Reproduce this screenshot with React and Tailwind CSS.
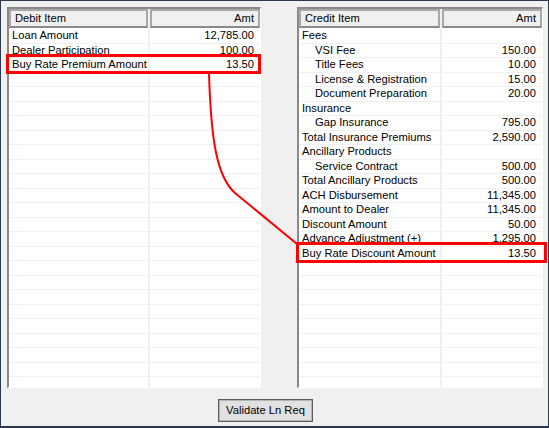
import React from 'react';

const debitRows = [
  { label: 'Loan Amount', amt: '12,785.00' },
  { label: 'Dealer Participation', amt: '100.00' },
  { label: 'Buy Rate Premium Amount', amt: '13.50' },
];

const creditRows = [
  { label: 'Fees', amt: '' },
  { label: 'VSI Fee', amt: '150.00', indent: true },
  { label: 'Title Fees', amt: '10.00', indent: true },
  { label: 'License & Registration', amt: '15.00', indent: true },
  { label: 'Document Preparation', amt: '20.00', indent: true },
  { label: 'Insurance', amt: '' },
  { label: 'Gap Insurance', amt: '795.00', indent: true },
  { label: 'Total Insurance Premiums', amt: '2,590.00' },
  { label: 'Ancillary Products', amt: '' },
  { label: 'Service Contract', amt: '500.00', indent: true },
  { label: 'Total Ancillary Products', amt: '500.00' },
  { label: 'ACH Disbursement', amt: '11,345.00' },
  { label: 'Amount to Dealer', amt: '11,345.00' },
  { label: 'Discount Amount', amt: '50.00' },
  { label: 'Advance Adjustment (+)', amt: '1,295.00' },
  { label: 'Buy Rate Discount Amount', amt: '13.50' },
];

const Grid = ({ title, rows, width, col1 }) => {
  const filled = [...rows];
  while (filled.length < 26) filled.push({ label: '', amt: '' });

  return (
    <div
      className={`${width} h-[381px] flex flex-col border-t-2 border-l-2 border-b border-r border-t-[#8a8a8a] border-l-[#8a8a8a] border-b-white border-r-white bg-white overflow-hidden`}
    >
      <div className="flex h-[19px] shrink-0 bg-[#f0f0f0]">
        <div
          className={`${col1} flex items-center pl-[4px] border-2 border-[#a8a8a8] border-b-[#8a8a8a] bg-[#f0f0f0]`}
        >
          {title}
        </div>
        <div className="flex-1 flex items-center justify-end pr-[4px] ml-[2px] border-2 border-[#a8a8a8] border-b-[#8a8a8a] bg-[#f0f0f0]">
          Amt
        </div>
      </div>
      <div className="flex-1 overflow-hidden pt-[1px]">
        {filled.map((r, i) => (
          <div key={i} className="flex h-[14.5px] border-b border-[#f0f0f0] leading-[13px]">
            <div
              className={`${col1} shrink-0 whitespace-nowrap overflow-hidden ${r.indent ? 'pl-[16px]' : 'pl-[3px]'}`}
            >
              {r.label}
            </div>
            <div className="flex-1 border-l-2 border-[#f0f0f0] text-right pr-[6px] whitespace-nowrap">
              {r.amt}
            </div>
          </div>
        ))}
      </div>
    </div>
  );
};

export default function App() {
  return (
    <div className="relative w-[549px] h-[428px] bg-[#f0f0f0] border-t border-l border-r border-b-2 border-[#2a3a4c] text-[11.2px] text-black font-['Liberation_Sans',Arial,sans-serif] overflow-hidden">
      <div className="flex pt-[6px] pl-[6px] gap-[36px]">
        <Grid title="Debit Item" rows={debitRows} width="w-[254px]" col1="w-[139px]" />
        <Grid title="Credit Item" rows={creditRows} width="w-[246px]" col1="w-[141px]" />
      </div>

      <div className="pl-[217px] pt-[11px]">
        <button className="w-[95px] h-[23px] flex items-center justify-center bg-[#e1e1e1] border border-[#5c5c5c] shadow-[inset_0_0_0_1px_#b4b4b4] text-[11.2px]">
          Validate Ln Req
        </button>
      </div>

      {/* annotation overlay */}
      <div className="absolute left-[5px] top-[53px] w-[255px] h-[20px] border-[3px] border-[#ff0000]" />
      <div className="absolute left-[295px] top-[241px] w-[251px] h-[21px] border-[3px] border-[#ff0000]" />
      <svg className="absolute left-0 top-0 pointer-events-none" width="549" height="428">
        <path
          d="M208 72 C 210 140, 216 176, 234 192 L 296 243"
          fill="none"
          stroke="#ff0000"
          strokeWidth="2"
        />
      </svg>
    </div>
  );
}
